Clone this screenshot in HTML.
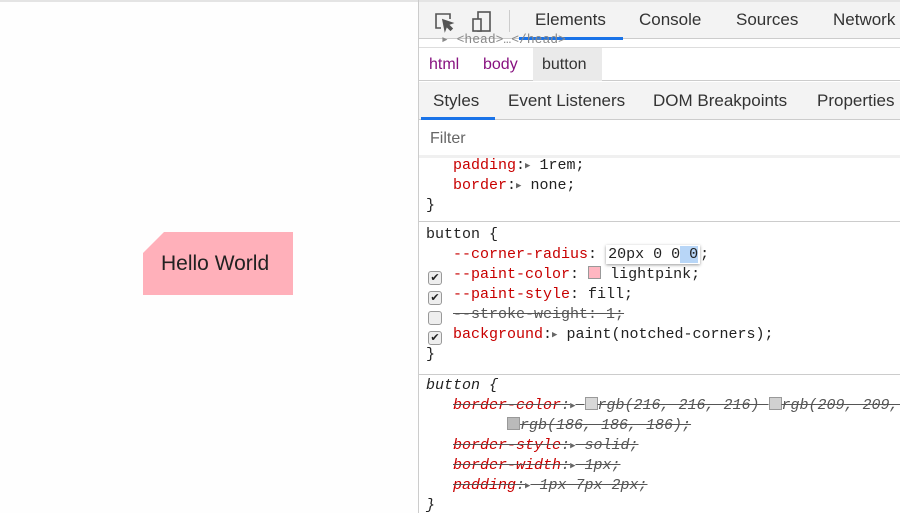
<!DOCTYPE html>
<html><head><meta charset="utf-8"><style>
*{margin:0;padding:0;box-sizing:border-box}
body{width:900px;height:513px;overflow:hidden;background:#fff;font-family:"Liberation Sans",sans-serif;position:relative}
.left{position:absolute;left:0;top:0;width:418px;height:513px;background:#fefefe;border-top:2px solid #e4e4e4}
.btn{position:absolute;left:143px;top:230px;width:150px;height:63px;background:#ffb0ba;clip-path:polygon(21px 0,150px 0,150px 63px,0 63px,0 21px);font-size:21px;color:#222;line-height:63px;padding-left:18px}
.dt{position:absolute;left:418px;top:0;width:482px;height:513px;border-left:1px solid #ccc;background:#fff;overflow:hidden}
.a{position:absolute;left:0;width:482px}
.tabs{top:0;height:39px;background:#f3f3f3;border-bottom:1px solid #ccc;border-top:2px solid #e4e4e4}
.t{position:absolute;top:8px;font-size:17px;color:#333}
.crumb{top:47px;height:34px;border-bottom:1px solid #ccc;border-top:1px solid #ddd}
.sub{top:82px;height:38px;background:#f3f3f3;border-bottom:1px solid #ccc}
.filter{top:121px;height:34px;background:#fff;font-size:16px;color:#666;padding:9px 0 0 11px}
.code{font-family:"Liberation Mono",monospace;font-size:15px;color:#222;position:absolute;white-space:pre;line-height:20px}
.code > *{line-height:20px}
.p{color:#c80000}
.s{text-decoration:line-through;color:#555}
.i{font-style:italic}
.sep{position:absolute;left:0;width:482px;height:1px;background:#ccc}
.cb{position:absolute;left:9px;width:14px;height:14px;border:1px solid #999;border-radius:3px;background:#eee;font-size:11px;line-height:12px;text-align:center;color:#222;font-family:"DejaVu Sans",sans-serif}
.sw{display:inline-block;width:13px;height:13px;border:1px solid #999;vertical-align:-1px}
.tri{color:#666;font-size:9px;display:inline-block;height:12px;line-height:12px;vertical-align:1px}
</style></head><body>
<div class="left"><div class="btn">Hello World</div></div>
<div class="dt">
 <div class="a tabs">
  <svg style="position:absolute;left:14px;top:9px" width="22" height="22" viewBox="0 0 22 22" fill="none" stroke="#555" stroke-width="1.6"><path d="M8 17H3V3h14v5"/><path d="M10 9l9 3-4 1.5 4 4-1.5 1.5-4-4L12 19z" fill="#555"/></svg>
  <svg style="position:absolute;left:52px;top:8px" width="22" height="24" viewBox="0 0 22 24" fill="none" stroke="#555" stroke-width="1.6"><rect x="7" y="2" width="12" height="19"/><rect x="2" y="9" width="8" height="12" fill="#f3f3f3"/></svg>
  <div style="position:absolute;left:90px;top:8px;width:1px;height:22px;background:#ccc"></div>
  <span class="t" style="left:116px">Elements</span>
  <div style="position:absolute;left:100px;top:35px;width:104px;height:3px;background:#1a73e8"></div>
  <span class="t" style="left:220px">Console</span>
  <span class="t" style="left:317px">Sources</span>
  <span class="t" style="left:414px">Network</span>
 </div>
 <div class="code" style="left:22px;top:30px;color:#888;font-size:13px">▸ &lt;head&gt;…&lt;/head&gt;</div>
 <div class="a crumb">
  <span style="position:absolute;left:10px;top:8px;font-size:16px;color:#881280">html</span>
  <span style="position:absolute;left:64px;top:8px;font-size:16px;color:#881280">body</span>
  <span style="position:absolute;left:114px;top:0;height:33px;width:69px;background:#eaeaea;font-size:16px;color:#333;padding:8px 0 0 9px">button</span>
 </div>
 <div class="a sub">
  <span class="t" style="left:14px;top:9px">Styles</span>
  <div style="position:absolute;left:2px;top:35px;width:74px;height:3px;background:#1a73e8"></div>
  <span class="t" style="left:89px;top:9px">Event Listeners</span>
  <span class="t" style="left:234px;top:9px">DOM Breakpoints</span>
  <span class="t" style="left:398px;top:9px">Properties</span>
 </div>
 <div class="a filter">Filter</div>
 <div class="a" style="top:155px;height:3px;background:#f0f0f0"></div>
 <div class="code" style="left:7px;top:156px">   <span class="p">padding</span>:<span class="tri">▶</span> 1rem;
   <span class="p">border</span>:<span class="tri">▶</span> none;
}</div>
 <div class="sep" style="top:221px"></div>
 <div class="code" style="left:7px;top:225px">button {
   <span class="p">--corner-radius</span>: <span style="box-shadow:0 1px 3px #999;padding:1px 2px">20px 0 0<span style="background:#b8d6f7"> 0</span></span>;
   <span class="p">--paint-color</span>: <span class="sw" style="background:#ffb6c1"></span> lightpink;
   <span class="p">--paint-style</span>: fill;
   <span class="s">--stroke-weight: 1;</span>
   <span class="p">background</span>:<span class="tri">▶</span> paint(notched-corners);
}</div>
 <div class="cb" style="top:271px">✔</div>
 <div class="cb" style="top:291px">✔</div>
 <div class="cb" style="top:311px"></div>
 <div class="cb" style="top:331px">✔</div>
 <div class="sep" style="top:374px"></div>
 <div class="code i" style="left:7px;top:376px;line-height:19.5px">button {
   <span class="s"><span class="p">border-color</span>:<span class="tri">▶</span> <span class="sw" style="background:#d8d8d8"></span>rgb(216, 216, 216) <span class="sw" style="background:#d1d1d1"></span>rgb(209, 209, 209)</span>
         <span class="s"><span class="sw" style="background:#bababa"></span>rgb(186, 186, 186);</span>
   <span class="s"><span class="p">border-style</span>:<span class="tri">▶</span> solid;</span>
   <span class="s"><span class="p">border-width</span>:<span class="tri">▶</span> 1px;</span>
   <span class="s"><span class="p">padding</span>:<span class="tri">▶</span> 1px 7px 2px;</span>
}</div>
</div>
</body></html>
